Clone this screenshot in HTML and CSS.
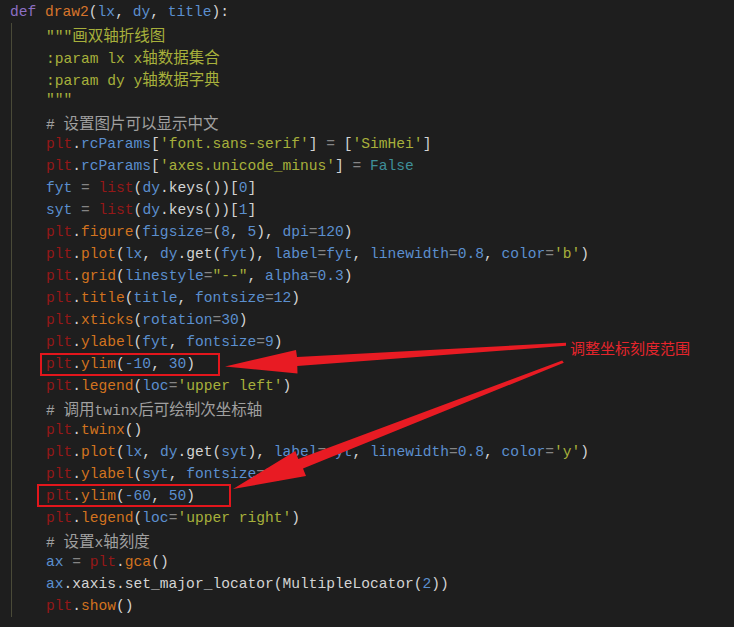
FILE: index.html
```html
<!DOCTYPE html>
<html lang="zh">
<head>
<meta charset="utf-8">
<title>draw2</title>
<link rel="stylesheet" href="styles.css">
</head>
<body>
<div class="editor">
  <div class="line first"><span class="k">def</span> <span class="f">draw2</span>(<span class="v">lx</span>, <span class="v">dy</span>, <span class="v">title</span>):</div>
  <div class="body">
    <div class="line"><span class="s">"""<span class="zh">画双轴折线图</span></span></div>
    <div class="line"><span class="s">:param lx x<span class="zh">轴数据集合</span></span></div>
    <div class="line"><span class="s">:param dy y<span class="zh">轴数据字典</span></span></div>
    <div class="line"><span class="s">"""</span></div>
    <div class="line"><span class="c"># <span class="zh">设置图片可以显示中文</span></span></div>
    <div class="line"><span class="p">plt</span>.<span class="v">rcParams</span>[<span class="s">'font.sans-serif'</span>] <span class="o">=</span> [<span class="s">'SimHei'</span>]</div>
    <div class="line"><span class="p">plt</span>.<span class="v">rcParams</span>[<span class="s">'axes.unicode_minus'</span>] <span class="o">=</span> <span class="b">False</span></div>
    <div class="line"><span class="v">fyt</span> <span class="o">=</span> <span class="p">list</span>(<span class="v">dy</span>.keys())[<span class="v">0</span>]</div>
    <div class="line"><span class="v">syt</span> <span class="o">=</span> <span class="p">list</span>(<span class="v">dy</span>.keys())[<span class="v">1</span>]</div>
    <div class="line"><span class="p">plt</span>.<span class="m">figure</span>(<span class="v">figsize</span><span class="o">=</span>(<span class="v">8</span>, <span class="v">5</span>), <span class="v">dpi</span><span class="o">=</span><span class="v">120</span>)</div>
    <div class="line"><span class="p">plt</span>.<span class="m">plot</span>(<span class="v">lx</span>, <span class="v">dy</span>.get(<span class="v">fyt</span>), <span class="v">label</span><span class="o">=</span><span class="v">fyt</span>, <span class="v">linewidth</span><span class="o">=</span><span class="v">0.8</span>, <span class="v">color</span><span class="o">=</span><span class="s">'b'</span>)</div>
    <div class="line"><span class="p">plt</span>.<span class="m">grid</span>(<span class="v">linestyle</span><span class="o">=</span><span class="s">"--"</span>, <span class="v">alpha</span><span class="o">=</span><span class="v">0.3</span>)</div>
    <div class="line"><span class="p">plt</span>.<span class="m">title</span>(<span class="v">title</span>, <span class="v">fontsize</span><span class="o">=</span><span class="v">12</span>)</div>
    <div class="line"><span class="p">plt</span>.<span class="m">xticks</span>(<span class="v">rotation</span><span class="o">=</span><span class="v">30</span>)</div>
    <div class="line"><span class="p">plt</span>.<span class="m">ylabel</span>(<span class="v">fyt</span>, <span class="v">fontsize</span><span class="o">=</span><span class="v">9</span>)</div>
    <div class="line"><span class="p">plt</span>.<span class="m">ylim</span>(<span class="v">-10</span>, <span class="v">30</span>)</div>
    <div class="line"><span class="p">plt</span>.<span class="m">legend</span>(<span class="v">loc</span><span class="o">=</span><span class="s">'upper left'</span>)</div>
    <div class="line"><span class="c"># <span class="zh">调用</span>twinx<span class="zh">后可绘制次坐标轴</span></span></div>
    <div class="line"><span class="p">plt</span>.<span class="m">twinx</span>()</div>
    <div class="line"><span class="p">plt</span>.<span class="m">plot</span>(<span class="v">lx</span>, <span class="v">dy</span>.get(<span class="v">syt</span>), <span class="v">label</span><span class="o">=</span><span class="v">syt</span>, <span class="v">linewidth</span><span class="o">=</span><span class="v">0.8</span>, <span class="v">color</span><span class="o">=</span><span class="s">'y'</span>)</div>
    <div class="line"><span class="p">plt</span>.<span class="m">ylabel</span>(<span class="v">syt</span>, <span class="v">fontsize</span><span class="o">=</span><span class="v">9</span>)</div>
    <div class="line"><span class="p">plt</span>.<span class="m">ylim</span>(<span class="v">-60</span>, <span class="v">50</span>)</div>
    <div class="line"><span class="p">plt</span>.<span class="m">legend</span>(<span class="v">loc</span><span class="o">=</span><span class="s">'upper right'</span>)</div>
    <div class="line"><span class="c"># <span class="zh">设置</span>x<span class="zh">轴刻度</span></span></div>
    <div class="line"><span class="v">ax</span> <span class="o">=</span> <span class="p">plt</span>.<span class="m">gca</span>()</div>
    <div class="line"><span class="v">ax</span>.xaxis.set_major_locator(MultipleLocator(<span class="v">2</span>))</div>
    <div class="line"><span class="p">plt</span>.<span class="m">show</span>()</div>
  </div>

  <svg class="overlay" width="734" height="627" viewBox="0 0 734 627">
    <rect x="41" y="354" width="178" height="21" fill="none" stroke="#e3161c" stroke-width="2"/>
    <rect x="38" y="485" width="192" height="21" fill="none" stroke="#e3161c" stroke-width="2"/>
    <polygon fill="#e81b23" points="566,342.8 297,357 296,350 225,366.5 297.5,373.5 297.3,366 566,345.8"/>
    <polygon fill="#e81b23" points="563.8,362.8 303,468.5 306,476 233,489 295.3,451 298.3,459 562.2,360.5"/>
  </svg>
  <div class="note">调整坐标刻度范围</div>
</div>
</body>
</html>
```

FILE: styles.css
```css
html, body {
  margin: 0;
  padding: 0;
  background: #1e1e1e;
}

.editor {
  position: relative;
  width: 734px;
  height: 627px;
  overflow: hidden;
  padding-top: 1px;
  box-sizing: border-box;
  background: #1e1e1e;
  color: #d4d4d4;
  font-family: "Liberation Mono", "Noto Sans CJK SC", monospace;
  font-size: 14.6px;
}

.line {
  height: 22px;
  line-height: 22px;
  white-space: pre;
}

.first {
  padding-left: 10px;
}

.body {
  margin-left: 11px;
  border-left: 1px solid #4a4a38;
  padding-left: 34px;
}

.zh {
  font-family: "Noto Sans CJK SC", sans-serif;
  font-size: 15.5px;
  line-height: 22px;
}

.k { color: #8d6fc4; }
.f { color: #d7752b; }
.v { color: #5b8fcf; }
.p { color: #951818; }
.m { color: #d2731f; }
.s { color: #a7b03b; }
.c { color: #a0a0a0; }
.o { color: #858585; }
.b { color: #3e8f99; }

.overlay {
  position: absolute;
  top: 0;
  left: 0;
  pointer-events: none;
}

.note {
  position: absolute;
  left: 570px;
  top: 338px;
  line-height: 20px;
  font-family: "Noto Sans CJK SC", sans-serif;
  font-size: 15px;
  color: #e5252c;
  white-space: nowrap;
}
```
